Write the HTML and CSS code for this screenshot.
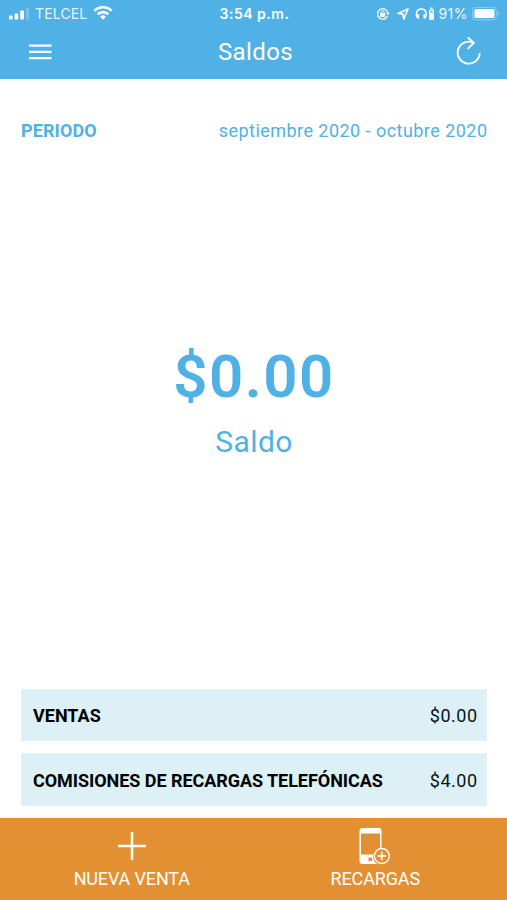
FILE: index.html
```html
<!DOCTYPE html>
<html lang="es">
<head>
<meta charset="utf-8">
<title>Saldos</title>
<link rel="stylesheet" href="styles.css">
</head>
<body>
<div class="app">
  <header class="header">
    <div class="status">
      <div class="status-left">
        <svg class="signal" width="21" height="12" viewBox="0 0 21 12" fill="#fff"><rect x="0" y="7.5" width="3.6" height="4" rx="1"/><rect x="5.6" y="5.5" width="3.6" height="6" rx="1"/><rect x="11.2" y="2.5" width="3.8" height="9" rx="1"/><rect x="17" y="0" width="3.2" height="11.5" rx="1" opacity=".22"/></svg>
        <span class="carrier">TELCEL</span>
        <svg class="wifi" width="20" height="15" viewBox="0 0 20 15" fill="none" stroke="#fff" stroke-width="2.7"><path d="M1.4 5.8a12.2 12.2 0 0 1 17.2 0M4.7 9.3a7.5 7.5 0 0 1 10.600 0"/><path d="M10 14.800 7.100 11.700a4.100 4.100 0 0 1 5.800 0z" fill="#fff" stroke="none"/></svg>
      </div>
      <span class="time">3:54 p.m.</span>
      <div class="status-right">
        <svg width="14" height="14" viewBox="0 0 14 14" fill="none" stroke="#fff" stroke-width="1.3"><path d="M11.500 9.200A5.200 5.200 0 1 1 11.500 4.800"/><path d="m10 5.600 3.800-.1-1.900 3z" fill="#fff" stroke="none"/><rect x="4.200" y="6.100" width="5" height="3.800" rx=".5" fill="#fff" stroke="none"/><path d="M5.300 6.400V5.200a1.400 1.400 0 0 1 2.800 0v1.200" stroke-width="1"/></svg>
        <svg width="12" height="12" viewBox="0 0 12 12" fill="none" stroke="#fff" stroke-width="1.600" stroke-linejoin="round"><path d="M11 1 1 5.400l5 .7.800 5z"/></svg>
        <svg width="20" height="14" viewBox="0 0 20 14" fill="none" stroke="#fff" stroke-width="1.400"><path d="M2.600 11.200C.5 8.300.7 2 6.300 2S12 8.300 10 11.200"/><path d="M2 7.300h2.100v4.400H2.800zM10.600 7.300H8.500v4.400h1.300z" fill="#fff" stroke="none"/><rect x="14" y="2.500" width="5" height="10.500" rx="1.200" fill="#fff" stroke="none"/><path d="M15.300 1.200h2.400" stroke-width="1.500"/><path d="M15.200 4.700h2.600" stroke="#50b1e6"/></svg>
        <span class="percent">91%</span>
        <svg width="28" height="14" viewBox="0 0 28 14"><rect x=".6" y=".3" width="23.600" height="12.500" rx="3" fill="none" stroke="#fff" stroke-opacity=".38"/><rect x="2.400" y="2" width="20" height="9" rx="1.600" fill="#fff"/><path d="M25.700 4.500c1.900.8 1.900 3.500 0 4.300z" fill="#fff" opacity=".4"/></svg>
      </div>
    </div>
    <div class="nav">
      <svg width="23" height="16" viewBox="0 0 23 16" fill="#fff"><path d="M0 .4h22.500v2.300H0zM0 6.700h22.500V9H0zM0 13h22.500v2.300H0z"/></svg>
      <h1 class="title">Saldos</h1>
      <svg width="26" height="30" viewBox="0 0 26 30" fill="none" stroke="#fff" stroke-width="1.900"><path d="M23.700 17A11 11 0 1 1 18 7"/><path d="m11.800 1.500 6 5.200-6 6.100"/></svg>
    </div>
  </header>
  <main class="main">
    <div class="period"><strong class="period-label">PERIODO</strong><span class="period-value">septiembre 2020 - octubre 2020</span></div>
    <div class="balance">
      <div class="amount">$0.00</div>
      <div class="caption">Saldo</div>
    </div>
    <div class="rows">
      <div class="row"><strong>VENTAS</strong><span class="value">$0.00</span></div>
      <div class="row"><strong class="row-fees">COMISIONES DE RECARGAS TELEFÓNICAS</strong><span class="value">$4.00</span></div>
    </div>
  </main>
  <footer class="footer">
    <div class="action">
      <svg width="30" height="38" viewBox="0 0 30 38" stroke="#fff" stroke-width="2.500"><path d="M1 19h28M15 5v28"/></svg>
      <span>NUEVA VENTA</span>
    </div>
    <div class="action">
      <svg width="32" height="38" viewBox="0 0 32 38"><path fill="#fff" fill-rule="evenodd" d="M3.500 1h16Q22.500 1 22.500 4v17.500h-1.400V6.500H2v21h12.500a7.900 7.900 0 0 0 3.700 9.500H3.500Q.5 37 .5 34V4Q.5 1 3.500 1zM9.500 30.500v3.600h3.600v-3.600z"/><circle cx="22.800" cy="29" r="7.500" fill="none" stroke="#fff" stroke-width="1.400"/><path d="M18.500 29h8.600M22.800 24.700v8.600" stroke="#fff" stroke-width="1.700"/></svg>
      <span>RECARGAS</span>
    </div>
  </footer>
</div>
</body>
</html>
```
FILE: styles.css
```css
* { box-sizing: border-box; }
body { margin: 0; background: #fff; font-family: Roboto, "Liberation Sans", sans-serif; }
svg { display: block; flex: none; }
span, strong, h1 { white-space: nowrap; }
.app { height: 900px; width: 507px; display: flex; flex-direction: column; overflow: hidden; }
.header { height: 79px; background: #50b1e6; color: #fff; flex: none; }
.status { height: 28px; display: grid; grid-template-columns: 1fr auto 1fr; align-items: center; padding: 0 7px 0 9px; font-family: Inter, sans-serif; font-size: 14px; line-height: 28px; }
.status-left, .status-right { display: flex; align-items: center; }
.carrier { margin: 0 6px 0 5px; opacity: .85; letter-spacing: .15px; }
.wifi { margin-top: -3px; }
.time { font-weight: 600; letter-spacing: .5px; }
.status-right { justify-content: flex-end; gap: 6px; }
.status-right svg:first-child { margin-right: 1px; }
.percent { opacity: .9; margin: 0 -2px 0 -3px; letter-spacing: .5px; }
.nav { height: 50px; display: grid; grid-template-columns: 1fr auto 1fr; align-items: center; padding: 0 25px 3px 29px; }
.nav svg:last-child { justify-self: end; margin-top: -1px; }
.title { margin: 0; font-size: 24px; line-height: 30px; font-weight: 400; letter-spacing: .4px; }
.main { flex: 1; display: flex; flex-direction: column; padding: 0 20px 12.500px 21px; color: #50b1e6; }
.period { height: 102px; display: flex; align-items: center; justify-content: space-between; font-size: 18px; }
.period-label { font-weight: 700; letter-spacing: .1px; }
.period-value { letter-spacing: .46px; margin-right: -.5px; }
.balance { flex: 1; text-align: center; padding-top: 160px; }
.amount { font-size: 60px; line-height: 72px; font-weight: 600; letter-spacing: 1.500px; }
.caption { font-size: 30px; line-height: 38px; margin-top: 10px; font-weight: 400; letter-spacing: .4px; }
.rows { display: flex; flex-direction: column; gap: 12px; }
.row { height: 52.500px; background: #dcf0f6; color: #000; display: flex; align-items: center; justify-content: space-between; padding: 2px 10px 0 12px; font-size: 18px; }
.row-fees { letter-spacing: -.05px; }
.value { color: #07141c; letter-spacing: .5px; margin-right: -.5px; }
.footer { height: 82px; flex: none; background: #e39032; color: #fff; display: grid; grid-template-columns: 1fr 1fr; padding: 0 10px; }
.action { display: flex; flex-direction: column; align-items: center; padding-top: 9px; font-size: 18px; line-height: 24px; letter-spacing: -.15px; }
.action > span { margin-top: 2px; }
```
